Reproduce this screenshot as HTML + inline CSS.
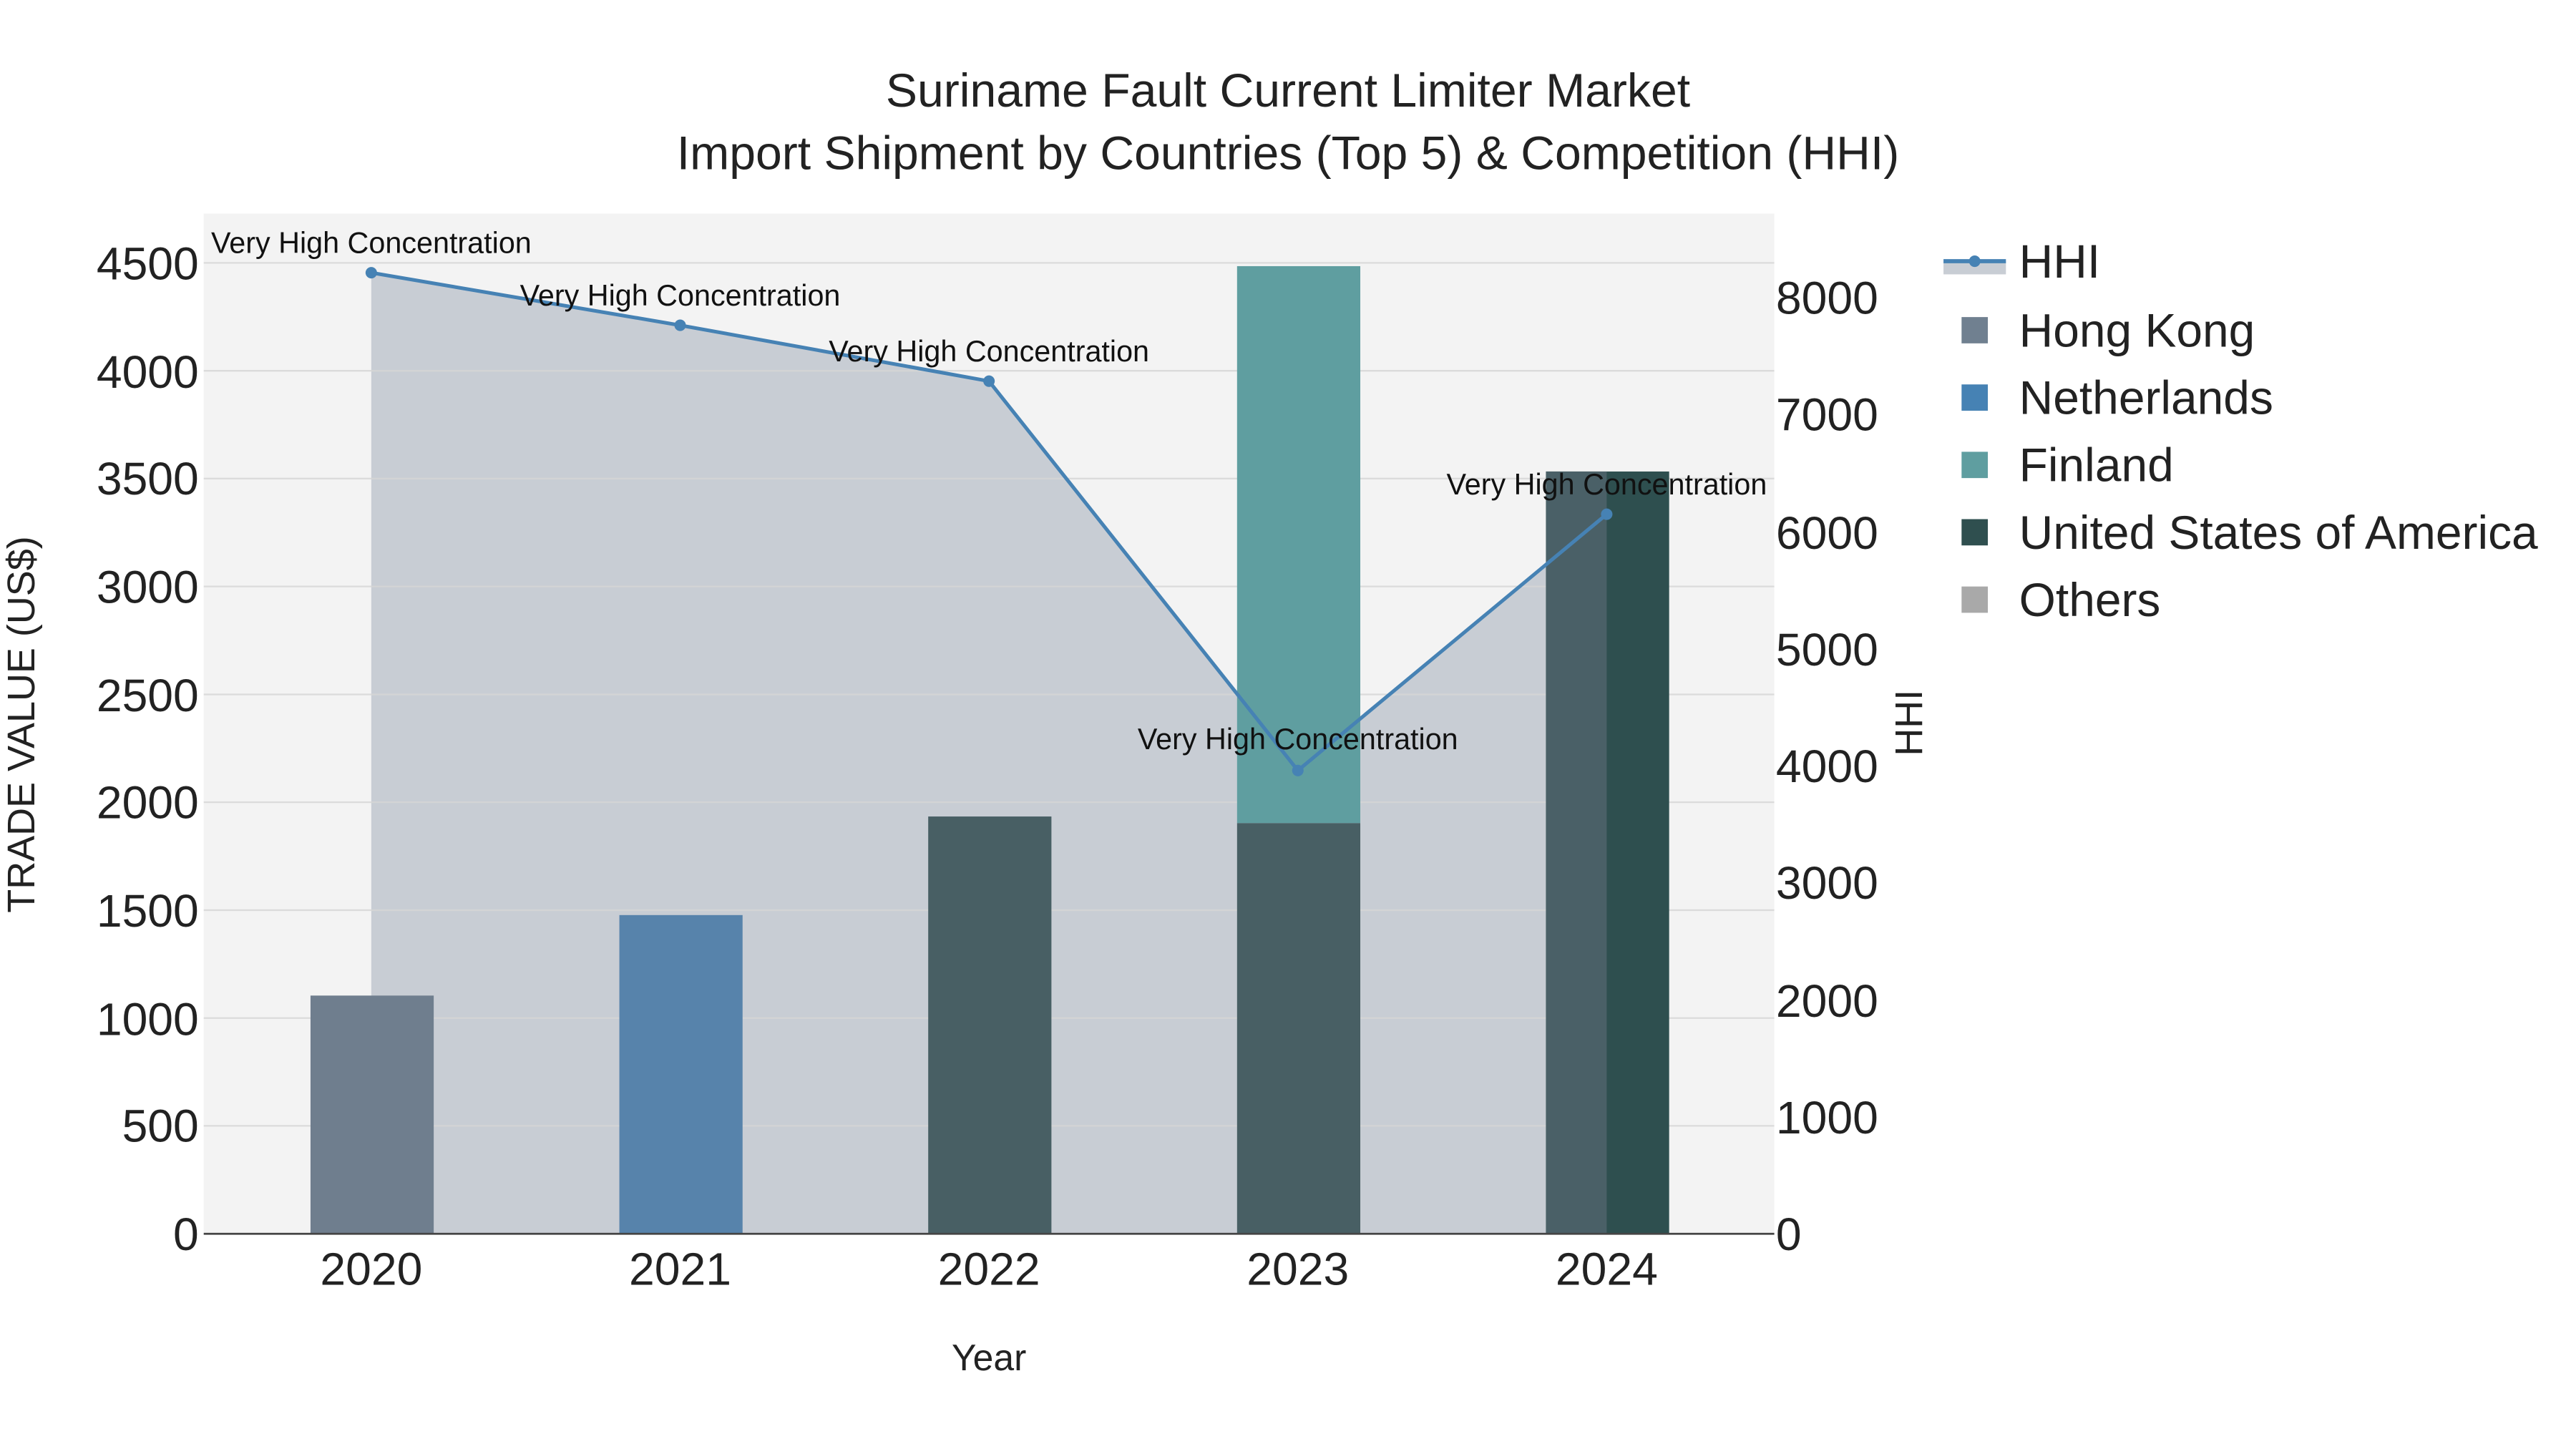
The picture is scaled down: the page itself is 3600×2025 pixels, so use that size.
<!DOCTYPE html>
<html><head><meta charset="utf-8"><style>html,body{margin:0;padding:0;background:#fff}svg{display:block}text{font-family:"Liberation Sans",sans-serif}</style></head><body>
<svg width="3600" height="2025" viewBox="0 0 1568 882" xmlns="http://www.w3.org/2000/svg">
<rect width="1568" height="882" fill="#fff"/>
<rect x="124" y="130" width="956" height="621" fill="#f3f3f3"/>
<polygon points="226,166 414,198 602,232 790,469 978,313 978,751 226,751" fill="#c8cdd4"/>
<g stroke="#d6d6d6" stroke-width="1" opacity="0.8">
<line x1="124" x2="1080" y1="685.3" y2="685.3"/><line x1="124" x2="1080" y1="619.7" y2="619.7"/><line x1="124" x2="1080" y1="554" y2="554"/><line x1="124" x2="1080" y1="488.3" y2="488.3"/><line x1="124" x2="1080" y1="422.7" y2="422.7"/><line x1="124" x2="1080" y1="357" y2="357"/><line x1="124" x2="1080" y1="291.3" y2="291.3"/><line x1="124" x2="1080" y1="225.7" y2="225.7"/><line x1="124" x2="1080" y1="160" y2="160"/>
</g>
<rect x="189" y="606" width="75" height="145" fill="#6f7e8e"/>
<rect x="377" y="557" width="75" height="194" fill="#5783ab"/>
<rect x="565" y="497" width="75" height="254" fill="#485f64"/>
<rect x="753" y="501" width="75" height="250" fill="#485f64"/>
<rect x="753" y="162" width="75" height="339" fill="#5f9ea0"/>
<rect x="941" y="287" width="75" height="464" fill="#2e4f4f"/>
<rect x="941" y="287" width="37" height="464" fill="#4a6067"/>
<line x1="124" x2="1080" y1="751" y2="751" stroke="#444" stroke-width="1.2"/>
<polyline points="226,166 414,198 602,232 790,469 978,313" fill="none" stroke="#4682b4" stroke-width="2.2"/>
<g fill="#4682b4"><circle cx="226" cy="166" r="3.5"/><circle cx="414" cy="198" r="3.5"/><circle cx="602" cy="232" r="3.5"/><circle cx="790" cy="469" r="3.5"/><circle cx="978" cy="313" r="3.5"/></g>
<g font-size="18" fill="#111" text-anchor="middle">
<text x="226" y="154">Very High Concentration</text><text x="414" y="186">Very High Concentration</text><text x="602" y="220">Very High Concentration</text><text x="790" y="456">Very High Concentration</text><text x="978" y="301">Very High Concentration</text>
</g>
<g font-size="28.8" fill="#222" text-anchor="middle"><text x="784" y="65">Suriname Fault Current Limiter Market</text><text x="784" y="103">Import Shipment by Countries (Top 5) &amp; Competition (HHI)</text></g>
<g font-size="28" fill="#222" text-anchor="end">
<text x="121" y="761">0</text><text x="121" y="695">500</text><text x="121" y="630">1000</text><text x="121" y="564">1500</text><text x="121" y="498">2000</text><text x="121" y="433">2500</text><text x="121" y="367">3000</text><text x="121" y="301">3500</text><text x="121" y="236">4000</text><text x="121" y="170">4500</text>
</g>
<g font-size="28" fill="#222">
<text x="1081" y="761">0</text><text x="1081" y="690">1000</text><text x="1081" y="619">2000</text><text x="1081" y="547">3000</text><text x="1081" y="476">4000</text><text x="1081" y="405">5000</text><text x="1081" y="334">6000</text><text x="1081" y="262">7000</text><text x="1081" y="191">8000</text>
</g>
<g font-size="28" fill="#222" text-anchor="middle">
<text x="226" y="782">2020</text><text x="414" y="782">2021</text><text x="602" y="782">2022</text><text x="790" y="782">2023</text><text x="978" y="782">2024</text>
</g>
<text x="602" y="834" font-size="22.5" fill="#222" text-anchor="middle">Year</text>
<text transform="translate(21,441) rotate(-90)" font-size="23.5" fill="#222" text-anchor="middle">TRADE VALUE (US$)</text>
<text transform="translate(1170,440) rotate(-90)" font-size="23.5" fill="#222" text-anchor="middle">HHI</text>
<rect x="1183" y="159" width="38" height="8" fill="#c8cdd4"/>
<line x1="1183" x2="1221" y1="159" y2="159" stroke="#4682b4" stroke-width="2.5"/><circle cx="1202" cy="159" r="3.5" fill="#4682b4"/>
<rect x="1194" y="193" width="16" height="16" fill="#708090"/>
<rect x="1194" y="234" width="16" height="16" fill="#4682b4"/>
<rect x="1194" y="275" width="16" height="16" fill="#5f9ea0"/>
<rect x="1194" y="316" width="16" height="16" fill="#2f4f4f"/>
<rect x="1194" y="357" width="16" height="16" fill="#a9a9a9"/>
<g font-size="28.7" fill="#222">
<text x="1229" y="169">HHI</text><text x="1229" y="211">Hong Kong</text><text x="1229" y="252">Netherlands</text><text x="1229" y="293">Finland</text><text x="1229" y="334">United States of America</text><text x="1229" y="375">Others</text>
</g>
</svg>
</body></html>
